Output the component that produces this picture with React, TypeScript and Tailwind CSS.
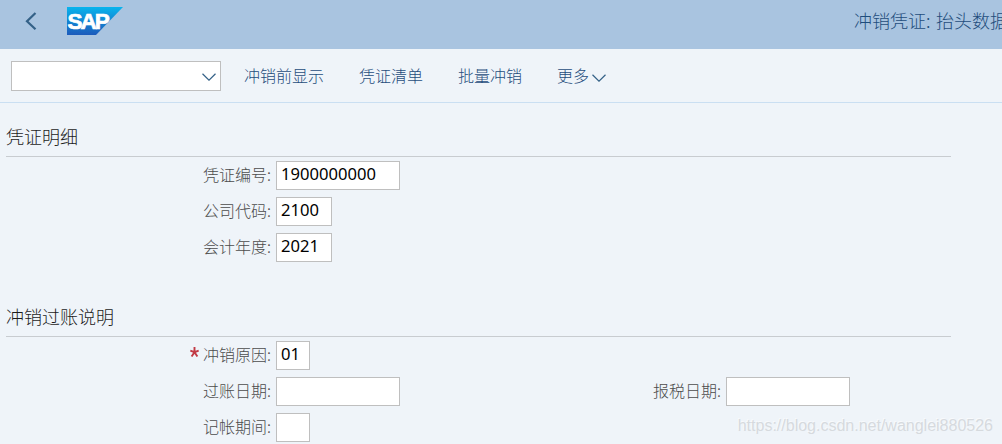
import React from 'react';

interface FieldProps {
  label: string;
  value?: string;
  width: string;
  required?: boolean;
}

const Field = ({ label, value = '', width, required = false }: FieldProps) => (
  <div className="flex h-[29px] items-center">
    <label className="flex w-[272px] shrink-0 items-center justify-end whitespace-nowrap pb-0.5 pr-px text-base leading-[27px] text-[#4c4c4c]">
      {required && (
        <svg className="mr-1 -mt-1 h-[11px] w-[9px]" viewBox="0 0 9 11" fill="none" stroke="#c23a45" strokeWidth="1.9">
          <path d="M4.5 0v5.5M.3 3.6l4.2 1.6 4.2-1.6M1.6 9.6l2.9-4.4 2.9 4.4" />
        </svg>
      )}
      <span>{label}</span>
      <span className="w-1">:</span>
    </label>
    <input
      className={`ml-1 h-[29px] border border-[#bfbfbf] bg-white pb-1 pl-1 font-['Noto_Sans','Noto_Sans_CJK_SC',sans-serif] text-[16.6px] font-normal text-black outline-none ${width}`}
      defaultValue={value}
    />
  </div>
);

const SectionTitle = ({ children }: { children: React.ReactNode }) => (
  <h2 className="h-[38px] w-[945px] border-b border-[#c8ccd0] text-lg leading-[35px] text-[#1c1c1c]">{children}</h2>
);

const ChevronDown = ({ className = '' }: { className?: string }) => (
  <svg className={`h-2 w-3.5 ${className}`} viewBox="0 0 14 8" fill="none" stroke="#346187" strokeWidth="1.2">
    <path d="M.5 .8L7 7.2L13.5 .8" />
  </svg>
);

const SapLogo = () => (
  <svg className="h-7 w-14" viewBox="0 0 56 28">
    <defs>
      <linearGradient id="sap" x1="0" y1="0" x2="0" y2="1">
        <stop offset="0" stopColor="#08b4ed" />
        <stop offset="0.5" stopColor="#1286d3" />
        <stop offset="1" stopColor="#1d5bbb" />
      </linearGradient>
    </defs>
    <path d="M0 0H56L29 28H0Z" fill="url(#sap)" />
    <text
      x="0.6"
      y="22.3"
      fill="#fff"
      stroke="#fff"
      strokeWidth="0.7"
      fontFamily="Liberation Sans, sans-serif"
      fontWeight="700"
      fontSize="22.5"
      letterSpacing="-2"
    >
      SAP
    </text>
  </svg>
);

const App = () => {
  const actions = ['冲销前显示', '凭证清单', '批量冲销'];

  return (
    <div className="relative h-[444px] w-full overflow-hidden bg-[#eff4f9] font-['Noto_Sans_CJK_SC',sans-serif] font-light">
      <header className="flex h-[49px] items-start overflow-hidden bg-[#a9c4e0]">
        <button className="ml-[25px] mt-3">
          <svg className="h-[18px] w-3" viewBox="0 0 12 18" fill="none" stroke="#346187" strokeWidth="2.2">
            <path d="M10.5 1L2 9.2L10.5 17.2" />
          </svg>
        </button>
        <div className="ml-[30px] mt-[7px]">
          <SapLogo />
        </div>
        {/* long titles run past the right edge of the bar */}
        <h1 className="ml-auto w-[148px] whitespace-nowrap text-lg leading-[41px] text-[#1f4d7c]">
          冲销凭证<span className="inline-block w-2.5">:</span>抬头数据
        </h1>
      </header>

      <nav className="flex h-[54px] items-center border-b border-[#cadff2] pl-[11px] text-base text-[#1f4d7c]">
        <button className="flex h-[30px] w-[210px] items-center justify-end border border-[#bfbfbf] bg-white pr-1">
          <ChevronDown className="mt-0.5" />
        </button>
        <div className="ml-[23px] flex items-center gap-[35px] pb-0.5">
          {actions.map((action) => (
            <button key={action}>{action}</button>
          ))}
          <button className="flex items-center">
            更多
            <ChevronDown className="ml-[3px] mt-1.5" />
          </button>
        </div>
      </nav>

      <main className="pl-1.5 pt-4">
        <section>
          <SectionTitle>凭证明细</SectionTitle>
          <div className="-ml-1.5 flex flex-col gap-[7px] pt-1">
            <Field label="凭证编号" value="1900000000" width="w-[124px]" />
            <Field label="公司代码" value="2100" width="w-14" />
            <Field label="会计年度" value="2021" width="w-14" />
          </div>
        </section>

        <section className="mt-[37px]">
          <SectionTitle>冲销过账说明</SectionTitle>
          <div className="-ml-1.5 flex flex-col gap-[7px] pt-1">
            <Field label="冲销原因" value="01" width="w-[34px]" required />
            <div className="flex">
              <div className="w-[450px]">
                <Field label="过账日期" width="w-[124px]" />
              </div>
              <Field label="报税日期" width="w-[124px]" />
            </div>
            <Field label="记帐期间" width="w-[34px]" />
          </div>
        </section>
      </main>

      <span className="absolute bottom-1.5 right-[9px] font-['Liberation_Sans',sans-serif] text-base font-normal text-[#d6dade] [text-shadow:-1px_-1px_0_#f8fafc]">
        https://blog.csdn.net/wanglei880526
      </span>
    </div>
  );
};

export default App;
